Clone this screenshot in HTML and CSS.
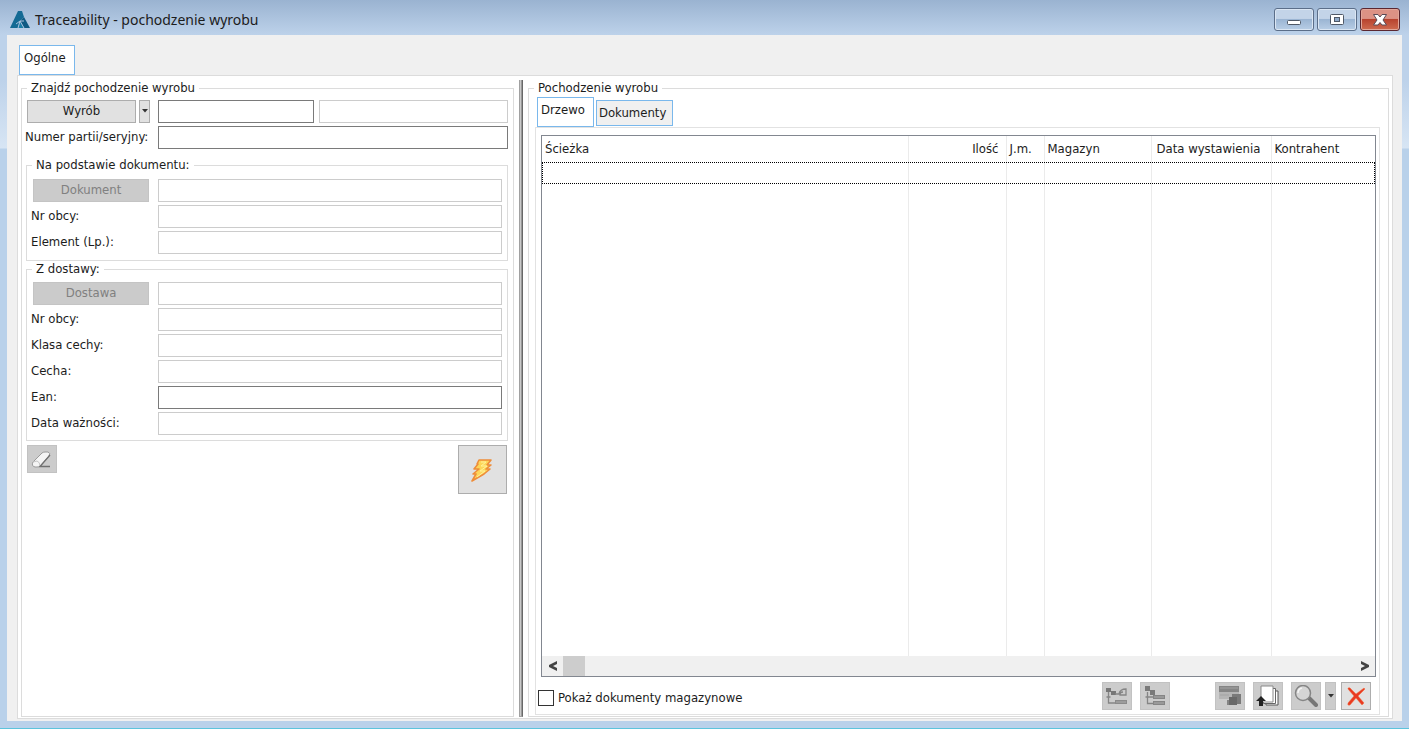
FILE: index.html
```html
<!DOCTYPE html>
<html lang="pl">
<head>
<meta charset="utf-8">
<title>Traceability - pochodzenie wyrobu</title>
<link rel="stylesheet" href="styles.css">
</head>
<body>
<div class="window">
  <header class="titlebar">
    <svg class="logo" viewBox="0 0 20 18" aria-hidden="true">
      <path d="M8 0h4l2 6-4 4-2 7H0z" fill="#146a94"/>
      <path d="M14 6l6 11h-6l-4-7z" fill="#0f5a83"/>
      <path d="M10 10l4 7H8z" fill="#1a7da6"/>
      <path d="M6 13l4-3h4M10 10l-2 7M10 10l4 7" fill="none" stroke="#a9c1dc"/>
    </svg>
    <h1 class="title">Traceability - pochodzenie wyrobu</h1>
    <div class="caption">
      <button class="cap" aria-label="Minimalizuj"><svg viewBox="0 0 16 14"><rect x="1.500" y="7.500" width="13" height="4" rx="1" fill="#fff" stroke="#4f5866"/></svg></button>
      <button class="cap" aria-label="Maksymalizuj"><svg viewBox="0 0 16 14"><rect x="1.500" y="1.500" width="13" height="10" rx="1" fill="#fff" stroke="#4f5866"/><rect x="5.500" y="4.500" width="5" height="4" fill="#8fa9c8" stroke="#4f5866"/></svg></button>
      <button class="cap cap-close" aria-label="Zamknij"><svg viewBox="0 0 16 14"><path d="M1.500 1.500h4.500l2 2.500 2-2.500h4.500L11 7l3.500 5H10L8 9.500 6 12H1.500L5 7z" fill="#fff" stroke="#5a4a55"/></svg></button>
    </div>
  </header>

  <main class="client">
    <div class="tabs" role="tablist">
      <button class="tab active" role="tab" aria-selected="true">Ogólne</button>
    </div>
    <div class="page">
      <fieldset class="group search">
        <legend>Znajdź pochodzenie wyrobu</legend>
        <div class="row product">
          <div class="split">
            <button class="btn">Wyrób</button>
            <button class="btn drop" aria-label="Więcej"><svg viewBox="0 0 6 4"><path d="M0 0h6L3 3.500z" fill="#333"/></svg></button>
          </div>
          <input class="field" type="text" aria-label="Kod wyrobu">
          <input class="field" type="text" aria-label="Nazwa wyrobu" disabled>
        </div>
        <div class="row">
          <label for="lot">Numer partii/seryjny:</label>
          <input class="field" id="lot" type="text">
        </div>

        <fieldset class="group sub">
          <legend>Na podstawie dokumentu:</legend>
          <div class="row"><button class="btn" disabled>Dokument</button><input class="field" type="text" aria-label="Dokument" disabled></div>
          <div class="row"><label for="d1">Nr obcy:</label><input class="field" id="d1" type="text" disabled></div>
          <div class="row"><label for="d2">Element (Lp.):</label><input class="field" id="d2" type="text" disabled></div>
        </fieldset>

        <fieldset class="group sub delivery">
          <legend>Z dostawy:</legend>
          <div class="row"><button class="btn" disabled>Dostawa</button><input class="field" type="text" aria-label="Dostawa" disabled></div>
          <div class="row"><label for="z1">Nr obcy:</label><input class="field" id="z1" type="text" disabled></div>
          <div class="row"><label for="z2">Klasa cechy:</label><input class="field" id="z2" type="text" disabled></div>
          <div class="row"><label for="z3">Cecha:</label><input class="field" id="z3" type="text" disabled></div>
          <div class="row"><label for="z4">Ean:</label><input class="field" id="z4" type="text"></div>
          <div class="row"><label for="z5">Data ważności:</label><input class="field" id="z5" type="text" disabled></div>
        </fieldset>

        <div class="actions">
          <button class="tool" disabled aria-label="Wyczyść">
            <svg viewBox="0 0 24 22"><path d="M3 14L12 5q1-1 3-1h3q3 1 1 4l-9 10q-1 1-3 1H5q-4-1-2-5z" fill="#f4f4f4" stroke="#9a9a9a"/><path d="M3 14l4-1q3 1 3 5" fill="none" stroke="#c4c4c4"/><path d="M20 7L10 18.500h10" fill="none" stroke="#707070" stroke-width="1.300"/></svg>
          </button>
          <button class="tool run" aria-label="Wykonaj">
            <svg viewBox="0 0 22 24"><path d="M8 2h12l-4 5h4l-5 4h4l-6 5L1 23l4-7H2l6-5H3l4-5h-1z" fill="#fdd65a" stroke="#ee8d3a" stroke-width="1.600" stroke-linejoin="round"/><path d="M10 4h5l-5 4h6l-7 5h5l-8 6" fill="none" stroke="#fff29a"/></svg>
          </button>
        </div>
      </fieldset>

      <div class="splitter"></div>

      <fieldset class="group result">
        <legend>Pochodzenie wyrobu</legend>
        <div class="tabs inner" role="tablist">
          <button class="tab active" role="tab" aria-selected="true">Drzewo</button>
          <button class="tab" role="tab" aria-selected="false">Dokumenty</button>
        </div>
        <div class="sheet">
          <div class="list">
            <div class="view">
              <table>
                <colgroup><col><col class="c-qty"><col class="c-unit"><col class="c-store"><col class="c-date"><col class="c-party"></colgroup>
                <thead><tr><th>Ścieżka</th><th class="num">Ilość</th><th>J.m.</th><th>Magazyn</th><th>Data wystawienia</th><th>Kontrahent</th></tr></thead>
                <tbody>
                  <tr class="focus"><td></td><td></td><td></td><td></td><td></td><td></td></tr>
                  <tr class="rest"><td></td><td></td><td></td><td></td><td></td><td></td></tr>
                </tbody>
              </table>
            </div>
            <div class="scroll">
              <button class="arrow" aria-label="W lewo"><svg viewBox="0 0 8 10"><path d="M8 0v3L4 5l4 2v3L0 6V4z" fill="#444"/></svg></button>
              <div class="thumb"></div>
              <button class="arrow end" aria-label="W prawo"><svg viewBox="0 0 8 10"><path d="M0 0v3l4 2-4 2v3l8-4V4z" fill="#444"/></svg></button>
            </div>
          </div>
          <div class="footer">
            <label class="check"><input type="checkbox">Pokaż dokumenty magazynowe</label>
            <div class="tools">
              <button class="tool" disabled aria-label="Rozwiń">
                <svg viewBox="0 0 24 22"><path d="M1 3h5v4H1zM6 6h5v4H6z" fill="#777"/><path d="M3.500 7v11H11M1.500 12h4M10 9h4q1-5 7-5v6h-6q0-3 3-3" fill="none" stroke="#858585" stroke-width="1.300"/><path d="M10 15h12v4H10z" fill="#8a8a8a"/><path d="M11 17h10" stroke="#adadad"/></svg>
              </button>
              <button class="tool" disabled aria-label="Zwiń">
                <svg viewBox="0 0 24 22"><path d="M2 1h5v5H2zM7 5h5v5H7z" fill="#7a7a7a"/><path d="M4.500 7v11.500H10M2.500 12h8" fill="none" stroke="#858585" stroke-width="1.300"/><path d="M10 10h12v4H10zM10 16h12v4H10z" fill="#858585"/><path d="M11 12h10M11 18h10" stroke="#adadad"/></svg>
              </button>
              <button class="tool gap" disabled aria-label="Pokaż">
                <svg viewBox="0 0 24 22"><path d="M1 1h20v13H1z" fill="#b5b5b5"/><path d="M1 1h20v6H1z" fill="#858585"/><path d="M2 3h18M2 10h9" stroke="#a3a3a3"/><path d="M9 15h6v5H9z" fill="#858585"/><path d="M14 9h9v10h-9z" fill="#7a7a7a"/><path d="M11 12h8v8h-8z" fill="#696969"/></svg>
              </button>
              <button class="tool" disabled aria-label="Kopiuj">
                <svg viewBox="0 0 24 22"><path d="M10 6h12v14H10z" fill="#fff" stroke="#555"/><path d="M7.500 3.500h12v15h-12z" fill="#fff" stroke="#666"/><path d="M5 1h12v16H5z" fill="#fff" stroke="#8a8a8a"/><path d="M5 11l5 5H7v5H3v-5H0z" fill="#222"/></svg>
              </button>
              <button class="tool" disabled aria-label="Podgląd">
                <svg viewBox="0 0 24 22"><path d="M15 13l7 7" stroke="#777" stroke-width="4" stroke-linecap="round"/><circle cx="9" cy="8" r="7.500" fill="#d5d5d5" stroke="#858585" stroke-width="1.500"/><path d="M4 8q0-4 4-5" fill="none" stroke="#f5f5f5" stroke-width="1.500"/></svg>
              </button>
              <button class="tool narrow" disabled aria-label="Opcje podglądu"><svg viewBox="0 0 6 4"><path d="M0 0h6L3 3.500z" fill="#333"/></svg></button>
              <button class="tool close" aria-label="Zamknij okno">
                <svg viewBox="0 0 24 22"><path d="M4 3q2-1 3 1l5 5 8-6 1 1-7 7 6 7-2 2-6-7-6 7q-3 1-2-2l6-7-6-7z" fill="#e93a22" stroke="#f36b38" stroke-width=".5"/></svg>
              </button>
            </div>
          </div>
        </div>
      </fieldset>
    </div>
  </main>
</div>
</body>
</html>
```
FILE: styles.css
```css
* { box-sizing: border-box; }
body {
  margin: 0;
  font: 13px/16px "DejaVu Sans Condensed", "Noto Sans", sans-serif;
  color: #1c1c1c;
}
button, input { font: inherit; color: inherit; margin: 0; }
button { padding: 0; }
svg { display: block; }

.window {
  display: flex;
  flex-direction: column;
  min-height: 100vh;
  padding: 0 7px 7px;
  background: linear-gradient(#9ab3d1 0, #bdd2ea 35px, #bdd2ea 80px, #d7e5f4 148px, #b9d1ea 149px);
  border-bottom: 1px solid #5cc4dc;
}
.titlebar {
  display: flex;
  align-items: center;
  height: 35px;
  padding: 4px 2px 0 3px;
}
.logo { width: 20px; height: 18px; }
.title {
  flex: 1;
  margin: 0 0 0 5px;
  font: 14px/20px "Noto Sans", sans-serif;
}
.caption { display: flex; align-self: flex-start; gap: 3px; padding-top: 4px; }
.cap {
  display: grid;
  place-items: center;
  width: 40px;
  height: 23px;
  border: 1px solid #5b6e89;
  border-radius: 3px;
  background: linear-gradient(#c3d4e8 45%, #9bb5d3 50%, #b8cee6);
  box-shadow: inset 0 0 0 1px #dbe6f3;
}
.cap svg { width: 16px; height: 14px; }
.cap-close {
  border-color: #5b2730;
  background: linear-gradient(#dc9285 45%, #b8432f 50%, #cf6b50);
  box-shadow: inset 0 0 0 1px #e2a79a;
}

.client {
  flex: 1;
  display: flex;
  flex-direction: column;
  padding: 10px 9px 2px 10px;
  background: #f0f0f0;
}
.tabs { display: flex; gap: 2px; padding-left: 2px; }
.tab {
  height: 30px;
  padding: 0 8px 4px 4px;
  border: 1px solid #7ab8ec;
  background: #f0f0f0;
}
.tab.active { background: #fff; }
.page {
  flex: 1;
  display: grid;
  grid-template-columns: minmax(400px, 493px) 4px minmax(0, 1fr);
  column-gap: 5px;
  padding: 4px 3px 1px;
  border: 1px solid #dcdcdc;
  background: #fff;
}
.group {
  min-width: 0;
  margin: 0;
  border: 1px solid #dcdcdc;
}
legend { padding: 0 4px; }
.search { padding: 2px 5px 4px 4px; }
.search > legend { margin-left: 1px; }
.row {
  display: grid;
  grid-template-columns: 132px minmax(0, 1fr);
  align-items: center;
  height: 26px;
  white-space: nowrap;
}
.row > label { margin-left: -1px; }
.row.product { grid-template-columns: 132px 156px minmax(0, 1fr); }
.split { display: flex; gap: 3px; margin-right: 8px; padding-left: 1px; }
.split .btn:first-child { flex: 1; }
.btn {
  height: 23px;
  border: 1px solid #adadad;
  background: #e1e1e1;
}
.row > .btn { margin: 0 9px 0 0; }
.btn:disabled { border-color: #c4c4c4; background: #cbcbcb; color: #808080; }
.drop { display: grid; place-items: center; width: 11px; }
.drop svg, .tool.narrow svg { width: 6px; height: 4px; }
.field {
  width: 100%;
  height: 23px;
  padding: 0 4px;
  border: 1px solid #7a7a7a;
  background: #fff;
}
.field:disabled { border-color: #cccccc; }
.product .field:last-child { margin-left: 5px; width: auto; }
.sub { padding: 4px 5px 5px 6px; margin-top: 7px; }
.sub legend { margin-left: -1px; }
.sub .row { grid-template-columns: 125px minmax(0, 1fr); }
.sub.delivery { margin-top: 0; padding-top: 3px; padding-bottom: 4px; }
.sub .row > label { margin-left: -2px; }
.actions {
  display: flex;
  justify-content: space-between;
  align-items: flex-start;
  padding: 4px 1px 0;
}
.tool {
  display: grid;
  place-items: center;
  width: 30px;
  height: 28px;
  border: 1px solid #c2c2c2;
  background: #cccccc;
}
.tool svg { width: 24px; height: 22px; }
.tool.run { width: 49px; height: 49px; padding-right: 2px; border-color: #adadad; background: #e1e1e1; }
.tool.run svg { width: 22px; height: 24px; }

.splitter {
  border: solid #a0a0a0;
  border-width: 0 1px 1px;
  border-right-color: #696969;
  background: linear-gradient(90deg, #e3e3e3, #808080);
}

.result {
  display: flex;
  flex-direction: column;
  padding: 1px 8px 1px 6px;
}
.result > legend { margin-left: -1px; }
.inner { align-items: flex-end; }
.inner .tab:not(.active) { height: 26px; padding: 0 6px 0 2px; margin-bottom: 1px; }
.inner .tab.active { padding-bottom: 5px; padding-left: 3px; }
.sheet {
  flex: 1;
  display: flex;
  flex-direction: column;
  padding: 7px 3px 4px 5px;
  border: 1px solid #e2e2e2;
}
.list {
  flex: 1;
  display: flex;
  flex-direction: column;
  border: 1px solid #828790;
}
.view { flex: 1; display: grid; }
table {
  width: 100%;
  height: 100%;
  table-layout: fixed;
  border-collapse: collapse;
}
.c-qty { width: 98px; }
.c-unit { width: 38px; }
.c-store { width: 107px; }
.c-date { width: 120px; }
.c-party { width: 104px; }
th, td { padding: 0 4px 0 3px; border-left: 1px solid #ebebeb; }
th:first-child, td:first-child { border-left: 0; }
th { height: 26px; font-weight: normal; text-align: left; white-space: nowrap; }
th.num { text-align: right; padding-right: 7px; }
th:nth-child(5) { padding-left: 5px; }
.focus td { height: 22px; }
.focus { outline: 1px dotted #000; outline-offset: -1px; }
.rest td { height: auto; }
.scroll { display: flex; height: 20px; background: #f0f0f0; }
.arrow {
  display: grid;
  place-items: center;
  width: 21px;
  border: 0;
  background: none;
}
.arrow svg { width: 8px; height: 10px; }
.arrow.end { margin-left: auto; }
.thumb { width: 22px; background: #cdcdcd; }
.footer {
  display: flex;
  justify-content: space-between;
  align-items: center;
  padding: 5px 5px 0 0;
}
.check { display: flex; align-items: center; gap: 4px; margin: 3px 0 0 -3px; }
.check input {
  appearance: none;
  width: 16px;
  height: 16px;
  border: 1px solid #333;
  background: #fff;
}
.tools { display: flex; gap: 8px; }
.tool.gap { margin-left: 37px; }
.tool.narrow { width: 11px; margin-left: -4px; margin-right: -3px; }
.tool.close { border-color: #adadad; background: #e1e1e1; }
```
